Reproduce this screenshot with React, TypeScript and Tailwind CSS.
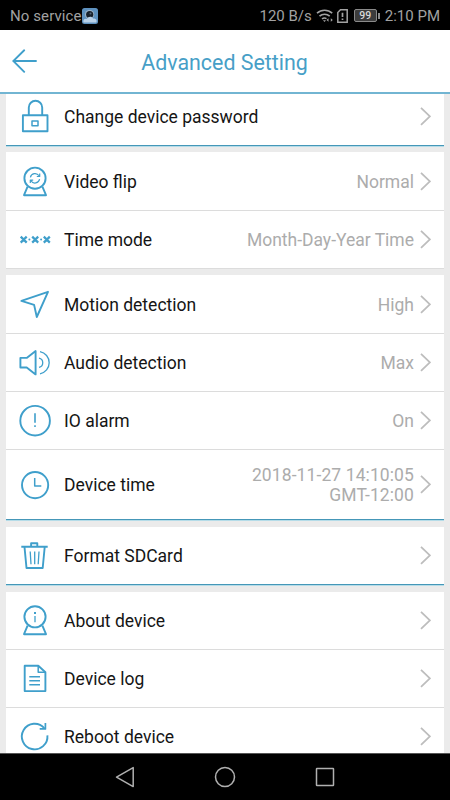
import type { ReactNode } from "react";
import clsx from "clsx";

type Item = {
  label: string;
  icon: ReactNode;
  value?: string[];
};

type Section = {
  items: Item[];
  className?: string;
  accent?: boolean;
};

const webcamStand = <path d="M12.6 25.6 9 34.2h22l-3.6-8.6" />;

const icons = {
  lock: (
    <>
      <rect x="7.9" y="19.2" width="24.6" height="16" />
      <path d="M13.8 19v-7.5a6.7 6.7 0 0 1 13.4 0V19" />
      <rect x="17" y="24.9" width="6" height="4.9" strokeWidth="1.5" />
    </>
  ),
  flip: (
    <>
      <circle cx="20" cy="17.2" r="10.6" />
      {webcamStand}
      <g strokeWidth="1.2">
        <path d="M15.4 16.4a4.7 4.7 0 0 1 8.6-1.6M24.7 12.6v2.9h-2.9" />
        <path d="M24.6 18.2a4.7 4.7 0 0 1-8.6 1.6M15.3 22v-2.9h2.9" />
      </g>
    </>
  ),
  time: (
    <>
      <path
        strokeWidth="2.2"
        d="m5.7 17.6 6 6M11.7 17.6l-6 6M17.2 17.6l6 6M23.2 17.6l-6 6M28.8 17.6l6 6M34.8 17.6l-6 6"
      />
      <path strokeWidth="2" strokeLinecap="round" d="M14.4 20.6h.01M26.1 20.6h.01" />
    </>
  ),
  motion: <path d="M33 7.8 6.4 16.9l12.7 4L21.8 33Z" />,
  audio: (
    <>
      <path d="M5.4 15.9h6.3l8.9-6.9v23.4l-8.9-6.9H5.4Z" />
      <path strokeWidth="1.3" d="M24 16.2a4.7 4.7 0 0 1 0 9.2M25 9.6a11.3 11.3 0 0 1 0 22.2" />
    </>
  ),
  alarm: (
    <>
      <circle cx="20.1" cy="20.7" r="14.8" />
      <path strokeWidth="1.6" d="M20 13.2v9.6M20 25.2v1.7" />
    </>
  ),
  clock: (
    <>
      <circle cx="20.1" cy="21.1" r="13.1" />
      <path d="M19.7 14v8h6.6" strokeWidth="1.5" />
    </>
  ),
  trash: (
    <>
      <path d="M6.3 11.7h26.4M16.1 11.4V8.2h6.2v3.2M9.5 12l2 21h16.2l2-21" />
      <path strokeWidth="1.3" d="m15.2 16.5.8 12.7M19.7 16.5v12.7M24 16.5l-.8 12.7" />
    </>
  ),
  about: (
    <>
      <circle cx="20" cy="16.8" r="10.6" />
      {webcamStand}
      <path strokeWidth="1.3" d="M20 16v6.2" />
      <path strokeWidth="2" d="M20 12.1v1.9" />
    </>
  ),
  log: (
    <>
      <path d="M9.7 7.7h13.6l7.1 6.5v18.9H9.7Z" />
      <path strokeWidth="1.5" d="M23.2 8v6.2h7" />
      <path strokeWidth="1.5" d="M14.3 18.7H25M14.3 22.7H25M14.3 26.7H25" />
    </>
  ),
  reboot: (
    <>
      <path d="M29.3 12.1a12.8 12.8 0 1 0 3.1 7.2" />
      <path strokeWidth="1.7" d="M30.4 7v5.9h-5.7" />
    </>
  ),
};

const sections: Section[] = [
  {
    className: "-mt-1.5",
    accent: true,
    items: [{ label: "Change device password", icon: icons.lock }],
  },
  {
    className: "mt-[5px] pt-px",
    items: [
      { label: "Video flip", icon: icons.flip, value: ["Normal"] },
      { label: "Time mode", icon: icons.time, value: ["Month-Day-Year Time"] },
    ],
  },
  {
    className: "mt-1.5 pt-px",
    accent: true,
    items: [
      { label: "Motion detection", icon: icons.motion, value: ["High"] },
      { label: "Audio detection", icon: icons.audio, value: ["Max"] },
      { label: "IO alarm", icon: icons.alarm, value: ["On"] },
      { label: "Device time", icon: icons.clock, value: ["2018-11-27 14:10:05", "GMT-12:00"] },
    ],
  },
  {
    className: "mt-1.5",
    accent: true,
    items: [{ label: "Format SDCard", icon: icons.trash }],
  },
  {
    className: "mt-1.5",
    items: [
      { label: "About device", icon: icons.about },
      { label: "Device log", icon: icons.log },
      { label: "Reboot device", icon: icons.reboot },
    ],
  },
];

function Row({ item, accent }: { item: Item; accent: boolean }) {
  const tall = item.value && item.value.length > 1;
  return (
    <div className={clsx("border-b", accent ? "border-[#4597b8]" : "border-[#dcdcdc]")}>
      <div className={clsx("flex items-center pl-[9px] pr-[13px]", tall ? "h-[69px]" : "h-[57px]")}>
        <svg
          width="40"
          height="41"
          viewBox="0 0 40 41"
          fill="none"
          stroke="#3f9fcb"
          strokeWidth="1.9"
          strokeLinejoin="round"
          className="shrink-0"
        >
          {item.icon}
        </svg>
        <span className="ml-[9px] pt-px text-[17.5px] leading-6 text-[#151515] whitespace-nowrap">{item.label}</span>
        <div
          className={clsx(
            "ml-auto pt-px text-right text-[17.5px] leading-5 text-[#acacac] whitespace-nowrap",
            tall && "tracking-[0.1px]"
          )}
        >
          {item.value?.map((line) => <p key={line}>{line}</p>)}
        </div>
        <svg width="11" height="19" viewBox="0 0 11 19" fill="none" stroke="#bdbdbd" strokeWidth="1.8" className="ml-1.5 shrink-0">
          <path d="m1 .9 8.9 8.5L1 17.9" />
        </svg>
      </div>
    </div>
  );
}

function StatusBar() {
  return (
    <div className="h-[30px] shrink-0 bg-black flex items-center pl-2.5 pr-[10px] text-[15px] text-[#a2a2a2] whitespace-nowrap">
      <span className="pt-[3px] w-[72px] tracking-[0.1px]">No service</span>
      <svg width="16" height="16" viewBox="0 0 16 16" className="mt-px">
        <rect width="16" height="16" rx="2.5" fill="#5e91be" />
        <circle cx="7.6" cy="6.6" r="4.6" fill="#9eb4c8" />
        <circle cx="7.7" cy="6.5" r="3.6" fill="#17202a" />
        <circle cx="8.5" cy="5.6" r="1" fill="#566778" />
        <path d="M1.5 14.5c-1-3 1.5-4.5 3.5-3.5 1-3 5-3 6-.5 3-.5 4.5 2 3.2 4Z" fill="#b9d1e7" />
      </svg>
      <span className="ml-auto pt-[3px]">120 B/s</span>
      <svg width="18" height="15" viewBox="0 0 18 15" fill="none" stroke="#a2a2a2" strokeWidth="1.6" className="ml-1 mt-px">
        <path d="M1 5.2a11.3 11.3 0 0 1 15.2 0M3.5 8.2a7.6 7.6 0 0 1 10.2 0M6 11a4 4 0 0 1 4.5-.4" />
        <path d="M7 12.3h3l-1.5 1.7Z" fill="#a2a2a2" stroke="none" />
        <path d="m10.5 12 2-1.8v3.6ZM16.8 12l-2-1.8v3.6Z" fill="#a2a2a2" stroke="none" />
      </svg>
      <svg width="11" height="14" viewBox="0 0 11 14" fill="none" stroke="#a2a2a2" strokeWidth="1.5" className="ml-[3px] mt-px">
        <path d="M3.5.8h6.7v12.4H.8V3.5Z" />
        <path d="M5.5 3.8V8M5.5 9.4V11" strokeWidth="1.7" />
      </svg>
      <span className="ml-1.5 mt-px w-[23px] h-[13px] border border-[#8a8a8a] rounded-[2px] bg-[#3c3c3c] flex items-center justify-center text-[10.5px] font-medium text-[#d8d8d8]">
        99
      </span>
      <span className="w-[2px] h-1.5 ml-px mt-px bg-[#8a8a8a]" />
      <span className="ml-[5px] pt-[3px]">2:10 PM</span>
    </div>
  );
}

export default function App() {
  return (
    <div className="w-[450px] h-[800px] flex flex-col overflow-hidden bg-[#ebebeb] font-['Roboto',sans-serif]">
      <StatusBar />

      <header className="h-16 shrink-0 bg-white border-b-2 border-[#72b5d2] grid grid-cols-[50px_1fr_50px] items-center">
        <svg width="26" height="24" viewBox="0 0 26 24" fill="none" stroke="#3f9fcb" strokeWidth="1.9" strokeLinecap="round" className="ml-3">
          <path d="M24 12H1.5M12.2 1.3 1.3 12l10.9 10.8" />
        </svg>
        <h1 className="pt-1 pr-px text-center text-[21.4px] leading-6 text-[#479fc7]">Advanced Setting</h1>
      </header>

      <main className="flex-1 min-h-0 overflow-hidden px-1.5">
        {sections.map((section) => (
          <section
            key={section.items[0].label}
            className={clsx("bg-white", section.className, section.accent && "border-b border-[#b5dce8]")}
          >
            {section.items.map((item, i) => (
              <Row key={item.label} item={item} accent={!!section.accent && i === section.items.length - 1} />
            ))}
          </section>
        ))}
      </main>

      <nav className="h-[47px] shrink-0 bg-black border-t border-[#555] flex items-center justify-center gap-[76px]">
        <svg width="24" height="24" viewBox="0 0 24 24" fill="none" stroke="#b0b0b0" strokeWidth="1.5" strokeLinejoin="round">
          <path d="M20.2 2.6v19L3.5 12.1Z" />
        </svg>
        <svg width="24" height="24" viewBox="0 0 24 24" fill="none" stroke="#b0b0b0" strokeWidth="1.5">
          <circle cx="12" cy="12" r="9.5" />
        </svg>
        <svg width="24" height="24" viewBox="0 0 24 24" fill="none" stroke="#b0b0b0" strokeWidth="1.5">
          <rect x="3.5" y="3.5" width="17" height="17" rx="0.5" />
        </svg>
      </nav>
    </div>
  );
}
